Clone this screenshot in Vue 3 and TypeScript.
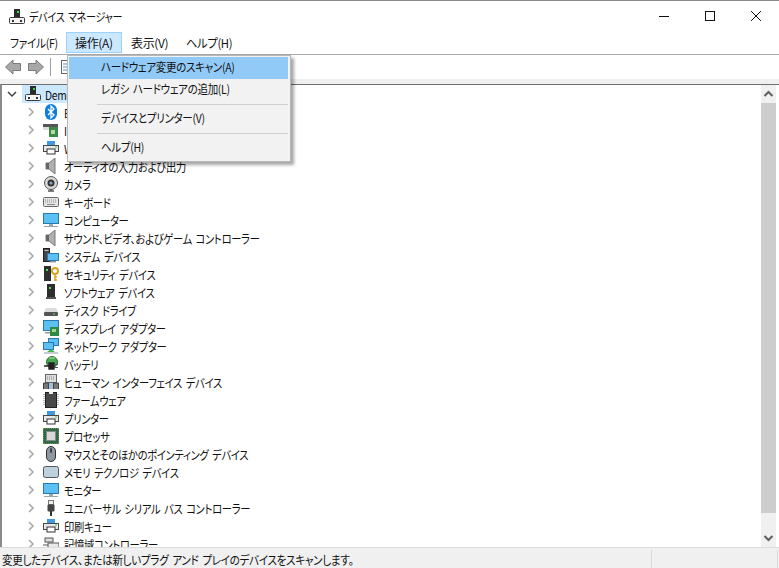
<script setup lang="ts">
interface Row { icon: string; label: string }
const rows: Row[] = [
  { icon: 'bt', label: 'Bluetooth' },
  { icon: 'ide', label: 'IDE ATA/ATAPI コントローラー' },
  { icon: 'printer', label: 'WSD 印刷プロバイダー' },
  { icon: 'sound', label: 'オーディオの入力および出力' },
  { icon: 'camera', label: 'カメラ' },
  { icon: 'keyboard', label: 'キーボード' },
  { icon: 'monitor', label: 'コンピューター' },
  { icon: 'sound', label: 'サウンド、ビデオ、およびゲーム コントローラー' },
  { icon: 'system', label: 'システム デバイス' },
  { icon: 'security', label: 'セキュリティ デバイス' },
  { icon: 'software', label: 'ソフトウェア デバイス' },
  { icon: 'disk', label: 'ディスク ドライブ' },
  { icon: 'display', label: 'ディスプレイ アダプター' },
  { icon: 'network', label: 'ネットワーク アダプター' },
  { icon: 'battery', label: 'バッテリ' },
  { icon: 'hid', label: 'ヒューマン インターフェイス デバイス' },
  { icon: 'firmware', label: 'ファームウェア' },
  { icon: 'printer', label: 'プリンター' },
  { icon: 'cpu', label: 'プロセッサ' },
  { icon: 'mouse', label: 'マウスとそのほかのポインティング デバイス' },
  { icon: 'memory', label: 'メモリ テクノロジ デバイス' },
  { icon: 'monitor', label: 'モニター' },
  { icon: 'usb', label: 'ユニバーサル シリアル バス コントローラー' },
  { icon: 'printer', label: '印刷キュー' },
  { icon: 'storage', label: '記憶域コントローラー' },
]
const menus = ['ファイル(F)', '操作(A)', '表示(V)', 'ヘルプ(H)']
</script>

<template>
  <div class="win">
    <svg class="defs" aria-hidden="true">
      <symbol id="root" viewBox="0 0 16 16">
        <rect x="5" y="0" width="6" height="8" fill="#2b2b2b" />
        <rect x="8" y="2" width="2" height="2" fill="#3fd04f" />
        <rect x="0.5" y="8.5" width="15" height="6" rx="1" fill="#f4f4f4" stroke="#3a3a3a" />
        <rect x="3" y="11" width="2" height="2" fill="#333" />
        <rect x="11" y="11" width="2" height="2" fill="#333" />
      </symbol>
      <symbol id="bt" viewBox="0 0 16 16">
        <rect x="2" y="0" width="12" height="16" rx="6" fill="#0a7fe0" />
        <path d="M5 5l6 6-3 3V2l3 3-6 6" fill="none" stroke="#fff" stroke-width="1.3" />
      </symbol>
      <symbol id="ide" viewBox="0 0 16 16">
        <rect x="0" y="2" width="15" height="3" fill="#555" />
        <rect x="0" y="5" width="7" height="3" fill="#ddd" />
        <rect x="6" y="5" width="9" height="10" fill="#3c8a4a" />
        <rect x="8" y="8" width="4" height="4" fill="#b8d9a0" />
      </symbol>
      <symbol id="printer" viewBox="0 0 16 16">
        <rect x="4" y="1" width="8" height="4" fill="#3e9be0" />
        <rect x="0" y="5" width="16" height="7" fill="#4a4a4a" />
        <rect x="1" y="6" width="14" height="5" fill="#e8e8e8" />
        <rect x="4" y="9" width="8" height="5" fill="#fff" stroke="#333" />
        <rect x="12" y="6.5" width="2" height="1" fill="#40c040" />
      </symbol>
      <symbol id="sound" viewBox="0 0 16 16">
        <path d="M3 5h3l6-5v16l-6-5H3z" fill="#b0b0b0" stroke="#7a7a7a" />
        <rect x="3" y="5" width="3" height="6" fill="#666" />
      </symbol>
      <symbol id="camera" viewBox="0 0 16 16">
        <circle cx="8" cy="7" r="6.5" fill="#d8d8d8" stroke="#555" />
        <circle cx="8" cy="7" r="3.5" fill="#333" />
        <circle cx="8" cy="7" r="1.6" fill="#7fa8cc" />
        <path d="M5 15h6" stroke="#555" stroke-width="1.5" />
        <path d="M8 13v2" stroke="#555" />
      </symbol>
      <symbol id="keyboard" viewBox="0 0 16 16">
        <rect x="0.5" y="3.5" width="15" height="9" rx="1" fill="#e6e6e6" stroke="#666" />
        <path d="M2 6h12M2 8h12" stroke="#8a8a8a" stroke-dasharray="1 1" />
        <path d="M4 10.5h8" stroke="#888" />
      </symbol>
      <symbol id="monitor" viewBox="0 0 16 16">
        <rect x="0.5" y="1.5" width="15" height="10" fill="#5cc0f5" stroke="#2a78b0" />
        <rect x="6" y="12" width="4" height="2" fill="#9aa" />
        <rect x="1" y="14" width="14" height="1" fill="#99a5ad" />
      </symbol>
      <symbol id="system" viewBox="0 0 16 16">
        <rect x="0.5" y="0.5" width="6" height="13" fill="#444" stroke="#222" />
        <rect x="1.5" y="2" width="4" height="1" fill="#ccc" />
        <rect x="4.5" y="5.5" width="11" height="7" fill="#5cc0f5" stroke="#2a78b0" />
        <rect x="7" y="13" width="6" height="1.5" fill="#999" />
      </symbol>
      <symbol id="security" viewBox="0 0 16 16">
        <rect x="1" y="0" width="7" height="15" fill="#2e2e2e" />
        <rect x="3" y="3" width="2" height="2" fill="#4fe04f" />
        <circle cx="12" cy="5" r="3" fill="none" stroke="#d9a520" stroke-width="2" />
        <path d="M12 8v7M12 11h2M12 14h2" stroke="#d9a520" stroke-width="1.5" />
      </symbol>
      <symbol id="software" viewBox="0 0 16 16">
        <rect x="4" y="0" width="8" height="13" fill="#2e2e2e" />
        <rect x="6" y="3" width="2" height="2" fill="#4fe04f" />
        <rect x="3" y="13" width="10" height="2" fill="#555" />
      </symbol>
      <symbol id="disk" viewBox="0 0 16 16">
        <path d="M3 6h10l2 4H1z" fill="#dcdcdc" />
        <rect x="1" y="10" width="14" height="4" rx="1" fill="#555" />
        <rect x="10" y="11.5" width="2" height="1" fill="#50e050" />
      </symbol>
      <symbol id="display" viewBox="0 0 16 16">
        <rect x="0.5" y="0.5" width="15" height="10" fill="#5cc0f5" stroke="#2a78b0" />
        <rect x="7" y="7" width="9" height="9" fill="#2f8a48" />
        <rect x="9" y="9" width="4" height="3" fill="#a5d490" />
        <rect x="2" y="12" width="5" height="1.5" fill="#999" />
      </symbol>
      <symbol id="network" viewBox="0 0 16 16">
        <rect x="5.5" y="0.5" width="10" height="7" fill="#5cc0f5" stroke="#2a78b0" />
        <rect x="0.5" y="4.5" width="10" height="7" fill="#5cc0f5" stroke="#2a78b0" />
        <path d="M8 11l4 3H4z" fill="#3fb34f" />
        <rect x="1" y="14" width="14" height="2" fill="#c5cdd2" />
      </symbol>
      <symbol id="battery" viewBox="0 0 16 16">
        <circle cx="9" cy="6" r="5.5" fill="#47a850" stroke="#2c6c34" />
        <path d="M1 10h5M6 7h5v6H6z" fill="#222" stroke="#222" stroke-width="1.4" />
        <path d="M11 8.5h4M11 11.5h4" stroke="#555" />
        <path d="M6 2h6" stroke="#a5e0a5" />
      </symbol>
      <symbol id="hid" viewBox="0 0 16 16">
        <rect x="2.5" y="0.5" width="11" height="8" fill="#ddd" stroke="#666" />
        <path d="M4 3h8M4 5h8" stroke="#888" stroke-dasharray="1 1" />
        <path d="M0.5 15V9h5v6M10.5 15V9h5v6" fill="#777" stroke="#444" />
        <path d="M7 9v6M9 9v6" stroke="#4a7fbf" />
      </symbol>
      <symbol id="firmware" viewBox="0 0 16 16">
        <rect x="2.5" y="0.5" width="11" height="15" fill="#484848" stroke="#222" />
        <path d="M1 2v12M15 2v12" stroke="#bbb" stroke-dasharray="1 1" stroke-width="2" />
        <rect x="6" y="0" width="4" height="2" fill="#eee" />
      </symbol>
      <symbol id="cpu" viewBox="0 0 16 16">
        <rect x="0" y="0" width="16" height="16" fill="#2f6a4a" />
        <rect x="0" y="0" width="16" height="16" fill="none" stroke="#c9a94a" stroke-dasharray="1 1" />
        <rect x="3.5" y="3.5" width="9" height="9" fill="#d8d8d8" stroke="#888" />
      </symbol>
      <symbol id="mouse" viewBox="0 0 16 16">
        <rect x="3.5" y="0.5" width="9" height="15" rx="4.5" fill="#8c98a2" stroke="#333" />
        <rect x="7" y="2" width="2" height="5" rx="1" fill="#444" />
      </symbol>
      <symbol id="memory" viewBox="0 0 16 16">
        <rect x="0.5" y="2.5" width="15" height="11" rx="2" fill="#bcd0dd" stroke="#555" />
      </symbol>
      <symbol id="usb" viewBox="0 0 16 16">
        <rect x="5.5" y="0.5" width="5" height="4" fill="#eee" stroke="#777" />
        <rect x="4.5" y="4.5" width="7" height="7" rx="1" fill="#444" />
        <rect x="7" y="11" width="2" height="5" fill="#333" />
      </symbol>
      <symbol id="storage" viewBox="0 0 16 16">
        <rect x="2" y="2" width="8" height="4" fill="#ddd" stroke="#555" />
        <path d="M0 9h5M11 9h5" stroke="#555" />
        <rect x="5" y="7" width="11" height="5" fill="#e8e8e8" stroke="#555" />
        <rect x="8" y="13" width="4" height="3" fill="#3fa34f" />
      </symbol>
    </svg>

    <header class="titlebar">
      <svg class="ico title-ico"><use href="#root" /></svg>
      <span class="title">デバイス マネージャー</span>
      <div class="controls">
        <svg class="ctl" viewBox="0 0 46 30"><path d="M18 16.5h10" stroke="#111" /></svg>
        <svg class="ctl" viewBox="0 0 46 30"><rect x="18.5" y="11.5" width="9" height="9" fill="none" stroke="#111" /></svg>
        <svg class="ctl" viewBox="0 0 46 30"><path d="M18 11l10 10M28 11L18 21" stroke="#111" /></svg>
      </div>
    </header>

    <nav class="menubar">
      <span v-for="(m, i) in menus" :key="m" class="menu" :class="{ open: i === 1 }"><span class="menu-text">{{ m }}</span></span>
    </nav>

    <div class="toolbar">
      <svg class="tool" viewBox="0 0 16 16"><path d="M0.5 8l7.5-7v3.500h7.500v7H8v3.500z" fill="#a8a8a8" stroke="#7a7a7a" /></svg>
      <svg class="tool" viewBox="0 0 16 16"><path d="M15.500 8L8 1v3.500H0.500v7H8v3.500z" fill="#a8a8a8" stroke="#7a7a7a" /></svg>
      <i class="tool-sep"></i>
      <svg class="tool" viewBox="0 0 16 16"><rect x="2.5" y="1.5" width="11" height="13" fill="#fff" stroke="#666" /><path d="M4 5h8M4 8h8M4 11h8" stroke="#5a8fc0" /></svg>
    </div>
    <div class="strip"></div>

    <main class="content">
      <div class="tree">
        <div class="row root">
          <svg class="chev-down" viewBox="0 0 10 10"><path d="M1 3l4 4 4-4" fill="none" stroke="#444" stroke-width="1.5" /></svg>
          <div class="root-sel">
            <svg class="ico"><use href="#root" /></svg>
            <span class="label">DemoPC</span>
          </div>
        </div>
        <div v-for="(r, i) in rows" :key="i" class="row child">
          <svg class="chev" viewBox="0 0 10 10"><path d="M3 1l4 4-4 4" fill="none" stroke="#a6a6a6" stroke-width="1.5" /></svg>
          <svg class="ico"><use :href="'#' + r.icon" /></svg>
          <span class="label">{{ r.label }}</span>
        </div>
      </div>
      <aside class="scrollbar">
        <svg class="arrow" viewBox="0 0 15 18"><path d="M3.5 11l4-4 4 4" fill="none" stroke="#606060" stroke-width="2" /></svg>
        <div class="thumb"></div>
        <svg class="arrow bottom" viewBox="0 0 15 18"><path d="M3.5 7l4 4 4-4" fill="none" stroke="#606060" stroke-width="2" /></svg>
      </aside>
    </main>

    <footer class="status">
      <div class="status-box"><span class="status-text">変更したデバイス、または新しいプラグ アンド プレイのデバイスをスキャンします。</span></div>
      <i class="status-cell"></i>
    </footer>

    <div class="dropdown">
      <div class="item active"><span class="item-text">ハードウェア変更のスキャン(A)</span></div>
      <div class="item"><span class="item-text">レガシ ハードウェアの追加(L)</span></div>
      <div class="sep"></div>
      <div class="item"><span class="item-text">デバイスとプリンター(V)</span></div>
      <div class="sep"></div>
      <div class="item"><span class="item-text">ヘルプ(H)</span></div>
    </div>
  </div>
</template>

<style scoped>
.win {
  position: relative;
  width: 779px;
  height: 568px;
  display: flex;
  flex-direction: column;
  overflow: hidden;
  background: #fff;
  color: #111;
  font-family: "Noto Sans CJK JP", "Liberation Sans", sans-serif;
  font-size: 12px;
  font-feature-settings: "palt";
  letter-spacing: -0.35px;
  word-spacing: 2px;
  border-top: 1px solid #8a8a8a;
  box-sizing: border-box;
}
.defs { position: absolute; width: 0; height: 0; }
.ico { width: 16px; height: 16px; flex: none; }
.label, .title, .status-text, .item-text, .menu-text {
  display: inline-block;
  white-space: nowrap;
  transform-origin: left center;
}
.label { transform: scaleX(0.858); }
.title { transform: scaleX(0.84); }
.status-text { transform: scaleX(0.88); }
.item-text { transform: scaleX(0.875); }
.titlebar {
  height: 29px;
  flex: none;
  display: flex;
  align-items: center;
  padding-left: 9px;
  padding-top: 2px;
  box-sizing: border-box;
}
.title { margin-left: 4px; }
.controls { margin-left: auto; display: flex; margin-top: -3px; }
.ctl { width: 46px; height: 30px; }
.menubar {
  height: 25px;
  flex: none;
  display: flex;
  align-items: center;
  padding-left: 1px;
  padding-top: 1px;
  box-sizing: border-box;
  border-bottom: 1px solid #a8a8a8;
}
.menu {
  height: 21px;
  box-sizing: border-box;
  line-height: 19px;
  padding-left: 8px;
  border: 1px solid transparent;
  width: 55px;
  white-space: nowrap;
}
.menu:nth-child(1) { width: 65px; }
.menu:nth-child(2) { width: 56px; }
.menu:nth-child(1) .menu-text { transform: scaleX(0.89); }
.menu:nth-child(4) .menu-text { transform: scaleX(0.94); }
.menu.open { background: #cce8ff; border-color: #99d1ff; }
.toolbar {
  height: 24px;
  flex: none;
  display: flex;
  align-items: center;
  padding-left: 5px;
  background: #fff;
}
.strip { height: 5px; flex: none; background: #f0f0f0; }
.tool { width: 16px; height: 16px; margin-right: 7px; }
.tool-sep { width: 1px; height: 18px; background: #a0a0a0; margin: 0 8px 0 -1px; }
.content {
  flex: 1;
  min-height: 0;
  display: flex;
  border-top: 1px solid #6f6f6f;
  border-left: 2px solid #8a8a8a;
}
.tree { flex: 1; overflow: hidden; }
.row { height: 18px; display: flex; align-items: center; white-space: nowrap; }
.child { padding-left: 24px; }
.chev { width: 10px; height: 10px; margin-right: 7px; flex: none; }
.child .ico { margin-right: 5px; }
.chev-down { width: 10px; height: 10px; margin: 0 5px 0 5px; flex: none; }
.root-sel {
  display: flex;
  align-items: center;
  height: 18px;
  width: 100px;
  background: #cce8ff;
  padding-left: 3px;
}
.root-sel .ico { margin-right: 4px; }
.scrollbar {
  width: 15px;
  margin-right: 3px;
  flex: none;
  background: #f0f0f0;
  display: flex;
  flex-direction: column;
}
.arrow { width: 15px; height: 18px; flex: none; }
.thumb { height: 410px; background: #cdcdcd; }
.arrow.bottom { margin-top: auto; }
.status {
  height: 21px;
  flex: none;
  display: flex;
  align-items: center;
  background: #f0f0f0;
  border-top: 1px solid #dcdcdc;
  padding-left: 2px;
  padding-top: 2px;
  box-sizing: border-box;
}
.status-box { width: 649px; overflow: hidden; }
.status-cell {
  width: 125px;
  height: 18px;
  border-left: 1px solid #d9d9d9;
  border-right: 1px solid #d9d9d9;
}
.dropdown {
  position: absolute;
  left: 67px;
  top: 54px;
  width: 224px;
  height: 107px;
  box-sizing: border-box;
  background: #f2f2f2;
  border: 1px solid #b8b8b8;
  padding: 1px 2px 1px 1px;
  box-shadow: 3px 3px 3px rgba(0, 0, 0, 0.35);
}
.item {
  height: 22px;
  line-height: 20px;
  padding-left: 32px;
  white-space: nowrap;
}
.item.active { background: #91c9f7; }
.sep { height: 1px; background: #d0d0d0; margin: 3px 0 3px 28px; }
</style>

<style>
html, body { margin: 0; overflow: hidden; }
</style>
